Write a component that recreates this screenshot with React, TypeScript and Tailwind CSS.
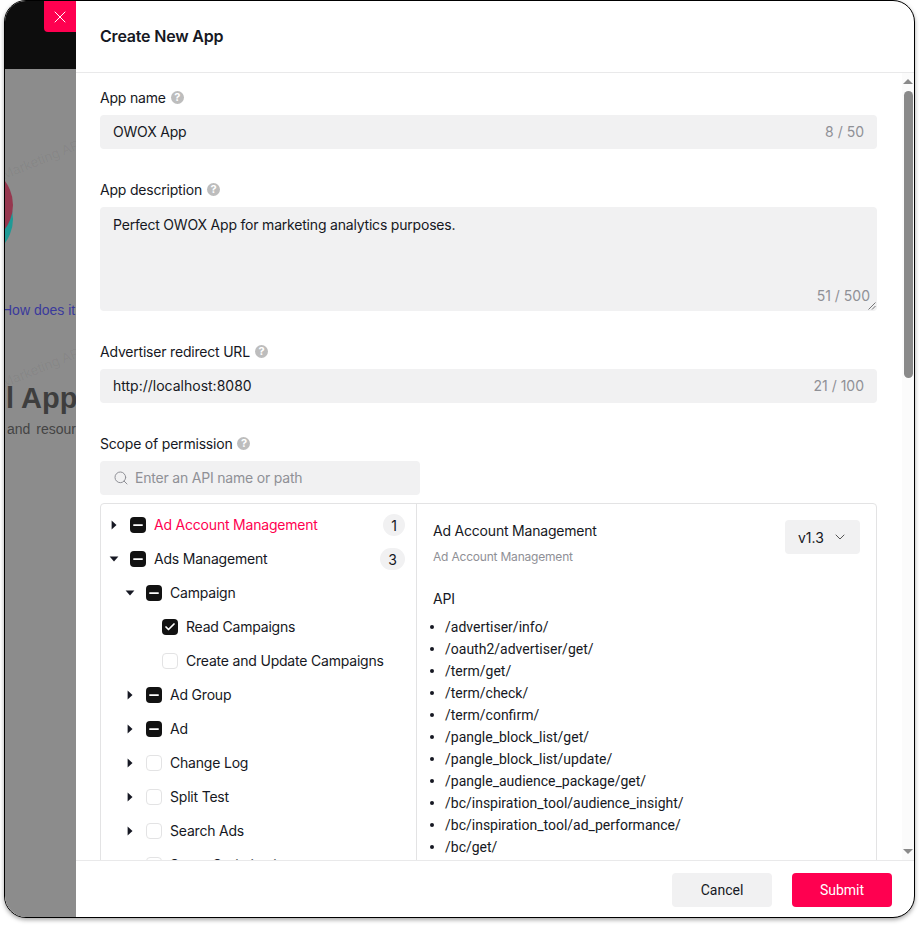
import React from 'react';
import { X, ChevronDown, Search, Check, Minus } from 'lucide-react';

type CheckState = 'none' | 'partial' | 'full';

interface TreeRow {
  label: string;
  indent: 'pl-[7px]' | 'pl-[23px]' | 'pl-[61px]';
  caret?: 'open' | 'closed';
  state: CheckState;
  active?: boolean;
  count?: number;
}

const treeRows: TreeRow[] = [
  { label: 'Ad Account Management', indent: 'pl-[7px]', caret: 'closed', state: 'partial', active: true, count: 1 },
  { label: 'Ads Management', indent: 'pl-[7px]', caret: 'open', state: 'partial', count: 3 },
  { label: 'Campaign', indent: 'pl-[23px]', caret: 'open', state: 'partial' },
  { label: 'Read Campaigns', indent: 'pl-[61px]', state: 'full' },
  { label: 'Create and Update Campaigns', indent: 'pl-[61px]', state: 'none' },
  { label: 'Ad Group', indent: 'pl-[23px]', caret: 'closed', state: 'partial' },
  { label: 'Ad', indent: 'pl-[23px]', caret: 'closed', state: 'partial' },
  { label: 'Change Log', indent: 'pl-[23px]', caret: 'closed', state: 'none' },
  { label: 'Split Test', indent: 'pl-[23px]', caret: 'closed', state: 'none' },
  { label: 'Search Ads', indent: 'pl-[23px]', caret: 'closed', state: 'none' },
  { label: 'Smart Optimization', indent: 'pl-[23px]', caret: 'closed', state: 'none' },
];

const apiPaths = [
  '/advertiser/info/',
  '/oauth2/advertiser/get/',
  '/term/get/',
  '/term/check/',
  '/term/confirm/',
  '/pangle_block_list/get/',
  '/pangle_block_list/update/',
  '/pangle_audience_package/get/',
  '/bc/inspiration_tool/audience_insight/',
  '/bc/inspiration_tool/ad_performance/',
  '/bc/get/',
  '/bc/asset/get/',
];

const Help = () => (
  <span className="flex h-[13px] w-[13px] items-center justify-center rounded-full bg-[#bdbdbd] text-[11px] font-bold leading-none text-white">
    ?
  </span>
);

const Label = ({ text }: { text: string }) => (
  <div className="flex h-[17px] items-center gap-[5px] text-[14px] leading-[17px] text-[#161823]">
    <span>{text}</span>
    <Help />
  </div>
);

const Field = ({ value, count, plain }: { value: string; count: string; plain?: boolean }) => (
  <div className="mt-[9px] flex h-[34px] items-center justify-between rounded-[4px] bg-[#f1f1f2] px-[13px] pb-[2px] text-[14px] text-[#161823]">
    <span className={plain ? 'tracking-normal' : ''}>{value}</span>
    <span className="tracking-normal text-[#8f9096]">{count}</span>
  </div>
);

const Caret = ({ dir }: { dir?: 'open' | 'closed' }) => (
  <span className="flex h-[12px] w-[12px] items-center justify-center">
    {dir === 'open' && (
      <svg width="10" height="6" viewBox="0 0 10 6"><path d="M0.6 0.5h8.8L5 5.4z" fill="#161823" /></svg>
    )}
    {dir === 'closed' && (
      <svg width="6" height="10" viewBox="0 0 6 10"><path d="M0.6 0.6v8.8L5.5 5z" fill="#161823" /></svg>
    )}
  </span>
);

const CheckBox = ({ state }: { state: CheckState }) => {
  if (state === 'none') {
    return <span className="block h-[16px] w-[16px] rounded-[4px] border border-[#e3e3e4] bg-white" />;
  }
  return (
    <span className="flex h-[16px] w-[16px] items-center justify-center rounded-[4px] bg-[#121212] text-white">
      {state === 'partial' ? <Minus size={14} strokeWidth={3} /> : <Check size={12} strokeWidth={3.5} />}
    </span>
  );
};

const Row = ({ row }: { row: TreeRow }) => (
  <div className={`flex h-[34px] items-center pr-[11px] ${row.indent}`}>
    {row.caret && <Caret dir={row.caret} />}
    <span className={row.caret ? 'ml-[10px]' : ''}>
      <CheckBox state={row.state} />
    </span>
    <span className={`ml-[8px] flex-1 pb-[2px] text-[14px] whitespace-nowrap ${row.active ? 'text-[#ff0050]' : 'text-[#161823]'}`}>
      {row.label}
    </span>
    {row.count !== undefined && (
      <span className={`flex h-[22px] items-center justify-center rounded-full bg-[#f1f1f2] text-[14px] text-[#161823] ${row.count === 3 ? 'w-[25px]' : 'w-[22px]'}`}>
        {row.count}
      </span>
    )}
  </div>
);

// page behind the drawer, only a sliver of it shows
const Backdrop = () => (
  <div className="relative h-full w-[71px] shrink-0 overflow-hidden bg-[#8c8c8c] font-['Liberation_Sans',sans-serif] tracking-normal">
    <div className="h-[68px] bg-[#0d0d0d]" />
    <div className="absolute left-[-72px] top-[178px] h-[80px] w-[80px] rounded-full bg-[#1f9a96]" />
    <div className="absolute left-[-72px] top-[164px] h-[80px] w-[80px] rounded-full bg-[#96384f]" />
    <div className="absolute left-[-3px] top-[164px] origin-left -rotate-[22deg] whitespace-nowrap text-[14px] text-black/5">Marketing API</div>
    <div className="absolute left-[-3px] top-[372px] origin-left -rotate-[22deg] whitespace-nowrap text-[14px] text-black/5">Marketing API</div>
    <div className="absolute left-[-3px] top-[300px] whitespace-nowrap text-[14px] leading-[18px] text-[#3a3a9c]">How does it work</div>
    <div className="absolute left-[1px] top-[380px] whitespace-nowrap text-[29px] font-bold leading-[34px] text-[#3e3e3e]">l Apps</div>
    <div className="absolute left-[2px] top-[419px] whitespace-nowrap text-[14px] leading-[18px] text-[#444444] [word-spacing:2px]">and resources</div>
    <button className="absolute right-0 top-0 flex h-[31px] w-[32px] items-center justify-center rounded-bl-[4px] bg-[#ff0050] text-white">
      <X size={20} strokeWidth={1.2} />
    </button>
  </div>
);

const FakeScrollbar = () => (
  <div className="flex w-[12px] shrink-0 flex-col items-center bg-[#fbfbfb]">
    <div className="mt-[6px] h-0 w-0 border-x-[5px] border-b-[5px] border-x-transparent border-b-[#8a8a8a]" />
    <div className="mt-[7px] h-[287px] w-[9px] rounded-full bg-[#8a8a8a]" />
    <div className="mt-auto mb-[6px] h-0 w-0 border-x-[5px] border-t-[5px] border-x-transparent border-t-[#8a8a8a]" />
  </div>
);

export default function App() {
  return (
    <div className="h-[926px] w-[919px] overflow-hidden bg-white pl-[4px] font-['Inter',sans-serif] tracking-[-0.2px]">
      <div className="flex h-[918px] w-[911px] overflow-hidden rounded-[22px] border-[1.5px] border-black bg-white shadow-[0_2px_4px_rgba(0,0,0,0.35)]">
        <Backdrop />
        <div className="flex h-full min-w-0 flex-1 flex-col">
          <div className="flex h-[72px] shrink-0 items-center border-b border-[#e9e9ea] px-[24px] pb-[2px] text-[16px] font-semibold text-[#161823]">
            Create New App
          </div>

          <div className="flex min-h-0 flex-1">
            <div className="min-w-0 flex-1 overflow-hidden pl-[24px] pr-[25px] pt-[16px]">
              <Label text="App name" />
              <Field value="OWOX App" count="8 / 50" />

              <div className="mt-[32px]">
                <Label text="App description" />
              </div>
              <div className="relative mt-[9px] h-[104px] rounded-[4px] bg-[#f1f1f2] px-[13px] pt-[8px] text-[14px] leading-[20px] text-[#161823]">
                Perfect OWOX App for marketing analytics purposes.
                <span className="absolute bottom-[5px] right-[7px] tracking-normal text-[#8f9096]">51 / 500</span>
                <svg className="absolute bottom-[1px] right-[1px]" width="8" height="8" viewBox="0 0 8 8">
                  <path d="M0.5 7.5 7.5 0.5M4 7.5 7.5 4" stroke="#555" strokeWidth="0.8" />
                </svg>
              </div>

              <div className="mt-[32px]">
                <Label text="Advertiser redirect URL" />
              </div>
              <Field value="http://localhost:8080" count="21 / 100" plain />

              <div className="mt-[32px]">
                <Label text="Scope of permission" />
              </div>
              <div className="mt-[9px] flex h-[34px] w-[320px] items-center gap-[6px] rounded-[4px] bg-[#f1f1f2] px-[13px] text-[14px] text-[#8f9096]">
                <Search size={16} strokeWidth={1.5} />
                <span className="pb-[2px]">Enter an API name or path</span>
              </div>

              <div className="mt-[8px] flex h-[420px] rounded-[4px] border border-[#e3e3e4]">
                <div className="w-[316px] shrink-0 border-r border-[#e3e3e4] pt-[4px]">
                  {treeRows.map(row => (
                    <Row key={row.label} row={row} />
                  ))}
                </div>
                <div className="min-w-0 flex-1 pl-[16px] pr-[16px] pt-[16px]">
                  <div className="flex items-start justify-between">
                    <div>
                      <div className="mt-[1px] text-[14px] leading-[20px] text-[#161823]">Ad Account Management</div>
                      <div className="mt-[7px] text-[12px] leading-[18px] text-[#8f9096]">Ad Account Management</div>
                    </div>
                    <div className="flex h-[34px] w-[75px] items-center gap-[8px] rounded-[4px] bg-[#f1f1f2] pl-[13px] text-[14px] tracking-normal text-[#161823]">
                      v1.3
                      <ChevronDown size={16} strokeWidth={1.5} className="text-[#555]" />
                    </div>
                  </div>
                  <div className="mt-[23px] text-[14px] leading-[20px] text-[#161823]">API</div>
                  <ul className="mt-[7px] -ml-[3px] font-['Roboto',sans-serif] text-[14px] leading-[22px] tracking-normal text-[#161823]">
                    {apiPaths.map(path => (
                      <li key={path} className="flex items-center gap-[11px]">
                        <span className="h-[4px] w-[4px] shrink-0 rounded-full bg-[#161823]" />
                        {path}
                      </li>
                    ))}
                  </ul>
                </div>
              </div>
            </div>
            <FakeScrollbar />
          </div>

          <div className="flex h-[57px] shrink-0 items-center justify-end gap-[20px] border-t border-[#e9e9ea] pr-[22px] pt-[2px] font-['Roboto',sans-serif] tracking-normal">
            <button className="h-[34px] w-[100px] rounded-[4px] bg-[#f1f1f2] text-[14px] text-[#161823]">Cancel</button>
            <button className="h-[34px] w-[100px] rounded-[4px] bg-[#ff0050] text-[14px] text-white">Submit</button>
          </div>
        </div>
      </div>
    </div>
  );
}
